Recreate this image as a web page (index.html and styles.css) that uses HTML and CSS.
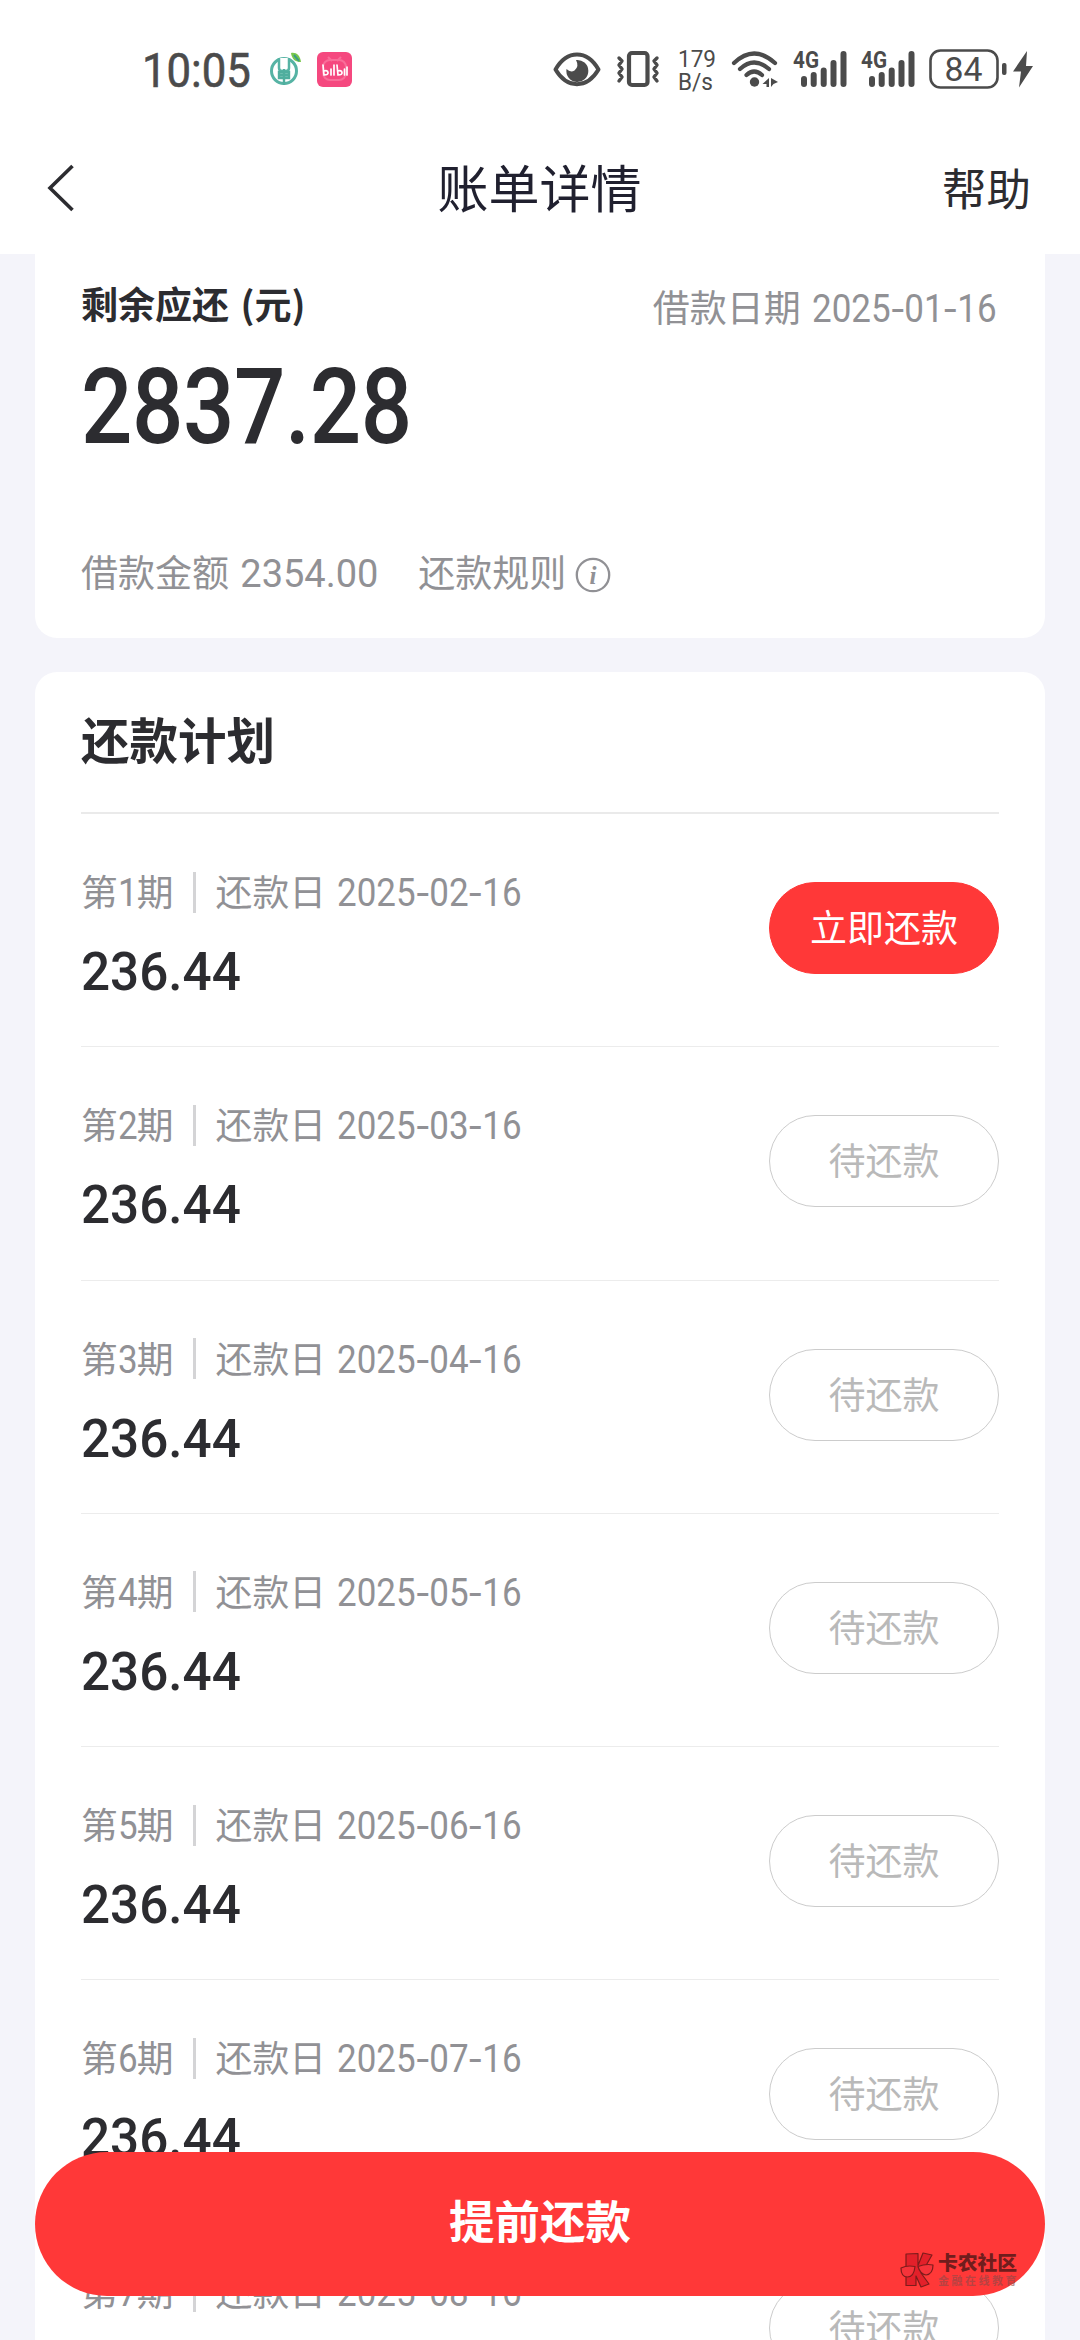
FILE: index.html
```html
<!DOCTYPE html>
<html lang="zh-CN">
<head>
<meta charset="utf-8">
<title>账单详情</title>
<link rel="stylesheet" href="styles.css">
</head>
<body>
<div class="screen">
  <header class="top">
    <div class="status">
      <span class="clock">10:05</span>
      <svg class="bank" width="34" height="36" viewBox="0 0 34 36">
        <circle cx="15" cy="19" r="12.500" fill="none" stroke="#56b3a4" stroke-width="3"/>
        <path d="M10 6v10q0 3 3 3h4q3 0 3-3V6" fill="#fff" stroke="#56b3a4" stroke-width="2.500"/>
        <path d="M10 20h10v6h-10zM15 17v16M10 23h10" fill="#8fd0c4" stroke="#4fae9e" stroke-width="2.400"/>
        <path d="M22 1c5-1 9 2 10 9-5 0-9-2-10-9z" fill="#78c74b"/>
        <path d="M25 3l5 6" stroke="#3b9c86" stroke-width="2"/>
      </svg>
      <svg class="bili" width="35" height="35" viewBox="0 0 35 35">
        <rect width="35" height="35" rx="6" fill="#f5487f"/>
        <rect x="6" y="8" width="23" height="20" rx="7" fill="none" stroke="#f96d99" stroke-width="2"/>
        <path d="M11 5l4 4M24 5l-4 4" stroke="#f96d99" stroke-width="2"/>
        <path d="M6 13l1 10q4.500 0 4-2.500t-4-1.500M14 17v6M17 13v10M20 13l1 10q4.500 0 4-2.500t-4-1.500M27.500 17v6M30 15v8" fill="none" stroke="#fff" stroke-width="1.700" stroke-linecap="round"/>
      </svg>
      <svg class="eye" width="48" height="36" viewBox="0 0 48 36">
        <path d="M2.500 18.500C14-1.500 34-1.500 45.500 18.500 34 38 14 38 2.500 18.500z" fill="none" stroke="#4b4b4b" stroke-width="4" stroke-linejoin="round"/>
        <path d="M23 9a11 11 0 1 1-9.500 9q4 4 8 1.500 5-4 1.500-10.500z" fill="#4b4b4b"/>
      </svg>
      <svg class="vib" width="44" height="38" viewBox="0 0 44 38" fill="none" stroke="#4b4b4b" stroke-linecap="round" stroke-linejoin="round">
        <rect x="13" y="3" width="18.500" height="32" rx="3" stroke-width="4.200"/>
        <path d="M3 8l3 3-3 4 3 4-3 4 3 4-3 4M41 8l-3 3 3 4-3 4 3 4-3 4 3 4" stroke-width="3.400"/>
      </svg>
      <span class="net"><span>179</span><span>B/s</span></span>
      <svg class="wifi" width="48" height="38" viewBox="0 0 48 38">
        <g fill="none" stroke="#4b4b4b" stroke-width="4.200" stroke-linecap="round"><path d="M3 13Q23-6 44 13M9 19Q23 6 38 19M15.500 25Q23 18 31 25"/></g>
        <circle cx="23.500" cy="32" r="4.700" fill="#4b4b4b"/>
        <path d="M38 28v9h-2.500v-3h-4zM40 28l7 4-4.500 2-2.500 3z" fill="#4b4b4b"/>
      </svg>
      <svg class="sig" width="55" height="38" viewBox="0 0 55 38">
        <text x="0" y="18" textLength="26" lengthAdjust="spacingAndGlyphs" class="g4">4G</text>
        <path d="M11 29v5M20.700 25v9M30.700 20.500v13.500M40.500 13v21M50.500 4v30" stroke="#4b4b4b" stroke-width="6" stroke-linecap="round"/>
      </svg>
      <svg class="sig" width="55" height="38" viewBox="0 0 55 38">
        <text x="0" y="18" textLength="26" lengthAdjust="spacingAndGlyphs" class="g4">4G</text>
        <path d="M11 29v5M20.700 25v9M30.700 20.500v13.500M40.500 13v21M50.500 4v30" stroke="#4b4b4b" stroke-width="6" stroke-linecap="round"/>
      </svg>
      <svg class="bat" width="105" height="40" viewBox="0 0 105 40">
        <rect x="1.500" y="1.500" width="67" height="37" rx="10" fill="none" stroke="#4b4b4b" stroke-width="2.600"/>
        <text x="15.500" y="32" textLength="38" lengthAdjust="spacingAndGlyphs" class="pct">84</text>
        <rect x="73" y="14" width="4.500" height="12" rx="2" fill="#4b4b4b"/>
        <path d="M98 2L84 22.500h8L90 38.500l14-21.500h-7z" fill="#4b4b4b"/>
      </svg>
    </div>
    <nav class="nav">
      <svg class="back" width="32" height="52" viewBox="0 0 32 52"><path d="M27.500 4L5 26 27.500 48" fill="none" stroke="#2c2c30" stroke-width="3.600"/></svg>
      <h1>账单详情</h1>
      <span class="help">帮助</span>
    </nav>
  </header>

  <main>
    <section class="card summary">
      <div class="line first"><strong>剩余应还 (元)</strong><span class="loan">借款日期 <span class="num d">2025<i>-</i>01<i>-</i>16</span></span></div>
      <div class="total">2837.28</div>
      <div class="line meta"><span class="amt">借款金额 <span class="num">2354.00</span></span><span>还款规则</span>
        <svg width="36" height="36" viewBox="0 0 36 36"><circle cx="18" cy="18" r="16.200" fill="none" stroke="#919195" stroke-width="2.300"/><text x="18" y="27" text-anchor="middle" class="info">i</text></svg>
      </div>
    </section>

    <section class="card plan">
      <h2>还款计划</h2>
      <ul>
        <li><div><p class="term"><span>第<b>1</b>期</span><s></s><span>还款日 <span class="num d">2025<i>-</i>02<i>-</i>16</span></span></p><p class="sum">236.44</p></div><a class="pill pay">立即还款</a></li>
        <li><div><p class="term"><span>第<b>2</b>期</span><s></s><span>还款日 <span class="num d">2025<i>-</i>03<i>-</i>16</span></span></p><p class="sum">236.44</p></div><a class="pill">待还款</a></li>
        <li><div><p class="term"><span>第<b>3</b>期</span><s></s><span>还款日 <span class="num d">2025<i>-</i>04<i>-</i>16</span></span></p><p class="sum">236.44</p></div><a class="pill">待还款</a></li>
        <li><div><p class="term"><span>第<b>4</b>期</span><s></s><span>还款日 <span class="num d">2025<i>-</i>05<i>-</i>16</span></span></p><p class="sum">236.44</p></div><a class="pill">待还款</a></li>
        <li><div><p class="term"><span>第<b>5</b>期</span><s></s><span>还款日 <span class="num d">2025<i>-</i>06<i>-</i>16</span></span></p><p class="sum">236.44</p></div><a class="pill">待还款</a></li>
        <li><div><p class="term"><span>第<b>6</b>期</span><s></s><span>还款日 <span class="num d">2025<i>-</i>07<i>-</i>16</span></span></p><p class="sum">236.44</p></div><a class="pill">待还款</a></li>
        <li><div><p class="term"><span>第<b>7</b>期</span><s></s><span>还款日 <span class="num d">2025<i>-</i>08<i>-</i>16</span></span></p><p class="sum">236.44</p></div><a class="pill">待还款</a></li>
      </ul>
    </section>
  </main>

  <a class="prepay">提前还款</a>
  <div class="mark">
    <svg width="34" height="36" viewBox="0 0 34 36">
      <g fill="#e3202a" stroke="#7e1c1c" stroke-width="1.200" stroke-linejoin="round">
        <path d="M6 2l12-.5v12l5-12.500 9 2-8 14-3 4 8 11-8 3-5-11v9.500H6z"/>
        <path fill="#f5333a" d="M1 16q6-3 14-1.500-1 10.500-7.500 10.500T1 16zM18 14.500q8-3 15-1.500 0 9-7 10-6-1-8-8.500z"/>
      </g>
    </svg>
    <div><span class="m1">卡农社区</span><span class="m2">金融在线教育</span></div>
  </div>
</div>
</body>
</html>
```
FILE: styles.css
```css
* { box-sizing: border-box; margin: 0; padding: 0; }
body { background: #f4f4fa; font-family: "Noto Sans CJK SC", sans-serif; color: #2c2c30; }
.screen { position: relative; width: 1080px; height: 2340px; overflow: hidden; }
svg { display: block; flex: none; overflow: visible; }
.top { height: 254px; background: #fff; }

.status { display: flex; align-items: flex-start; height: 122px; padding: 49px 0 0 142px; color: #4b4b4b; }
.clock { width: 127px; font: 400 48px/43px Roboto, sans-serif; -webkit-text-stroke: .6px #4b4b4b; transform: scaleX(.91); transform-origin: left; }
.bank { margin-top: 3px; }
.bili { margin: 3px 0 0 14px; }
.eye { margin: 2px 0 0 201px; }
.vib { margin: 1px 0 0 15px; }
.net { width: 40px; margin: -2px 0 0 18px; display: flex; flex-direction: column; font: 400 24.5px/23px Roboto, sans-serif; transform: scaleX(.92); transform-origin: left; }
.wifi { margin: 1px 0 0 13px; }
.sig { margin: 1px 0 0 13.500px; }
.bat { margin-left: 13px; }
.g4 { font: 700 24px Roboto, sans-serif; fill: #4b4b4b; }
.pct { font: 400 34px Roboto, sans-serif; fill: #4b4b4b; }

.nav { display: flex; justify-content: space-between; align-items: center; height: 132px; padding: 0 49px 0 45px; }
.nav h1 { font-size: 51px; font-weight: 400; line-height: 70px; color: #20202f; padding: 0 0 4px 60px; }
.back, .help { flex: none; }
.help { font-size: 44.500px; line-height: 60px; padding-bottom: 3px; }

.card { margin: 0 35px; padding: 0 46px; background: #fff; }
.summary { height: 384px; border-radius: 0 0 22px 22px; }
.line { display: flex; font-size: 37px; line-height: 50px; color: #919195; white-space: pre; }
.first { justify-content: space-between; padding-top: 24px; }
.first strong { font-weight: 700; font-size: 37px; word-spacing: 3px; color: #2c2c30; }
.loan { position: relative; top: 3px; }
.num, .term b { display: inline-block; font-family: Roboto, sans-serif; font-weight: 400; font-size: 38px; line-height: 40px; transform-origin: left; transform: scaleX(.92); }
.num { width: 136px; margin-left: 3px; transform: scaleX(1); }
.num.d { width: 187px; transform: scaleX(.92); }
.num i { display: inline-block; font-style: normal; margin: 0 2.200px; transform: scaleX(1.300); }
.total { margin-top: 15px; font: 500 105px/130px Roboto, sans-serif; transform: scaleX(.862); transform-origin: left; letter-spacing: -.5px; }
.meta { margin-top: 73px; }
.amt { margin-right: 42px; }
.meta svg { margin: 11px 0 0 9px; }
.info { font: italic 700 25px "Liberation Serif", serif; fill: #919195; }

.plan { margin-top: 34px; height: 1900px; border-radius: 22px; }
.plan h2 { height: 142px; border-bottom: 2px solid #eaeaea; font-size: 48.500px; line-height: 133px; font-weight: 700; }
ul { list-style: none; }
li { display: flex; justify-content: space-between; height: 233.300px; padding-top: 53px; border-bottom: 1px solid #ececec; }
.term { display: flex; height: 50px; align-items: center; font-size: 36.800px; line-height: 50px; color: #919195; white-space: pre; }
.term > span { position: relative; top: -2px; }
.term b { width: 19px; }
.term s { width: 3px; height: 41px; margin: 0 20px 0 19px; background: #d4d4d6; }
.sum { margin-top: 22px; font: 500 54.500px/64px Roboto, sans-serif; transform: scaleX(.94); transform-origin: left; }
.pill { width: 230px; height: 92px; margin-top: 15px; border: 1px solid #ccc; border-radius: 46px; color: #b9b9b9; font-size: 37px; line-height: 86px; text-align: center; }
.pay { background: #ff3838; border-color: #ff3838; color: #fff; }

.prepay { position: absolute; left: 35px; top: 2152px; width: 1010px; height: 144px; border-radius: 72px; background: #ff3838; color: #fff; font-size: 45.500px; font-weight: 700; line-height: 134px; text-align: center; }
.mark { position: absolute; left: 900px; top: 2252px; display: flex; gap: 4px; }
.mark div { display: flex; flex-direction: column; }
.m1 { font-size: 19.800px; line-height: 20px; font-weight: 900; color: #701d1d; }
.m2 { font-size: 11px; line-height: 17px; letter-spacing: 2.500px; font-weight: 700; color: #8a4a4a; opacity: .6; white-space: nowrap; }
```
